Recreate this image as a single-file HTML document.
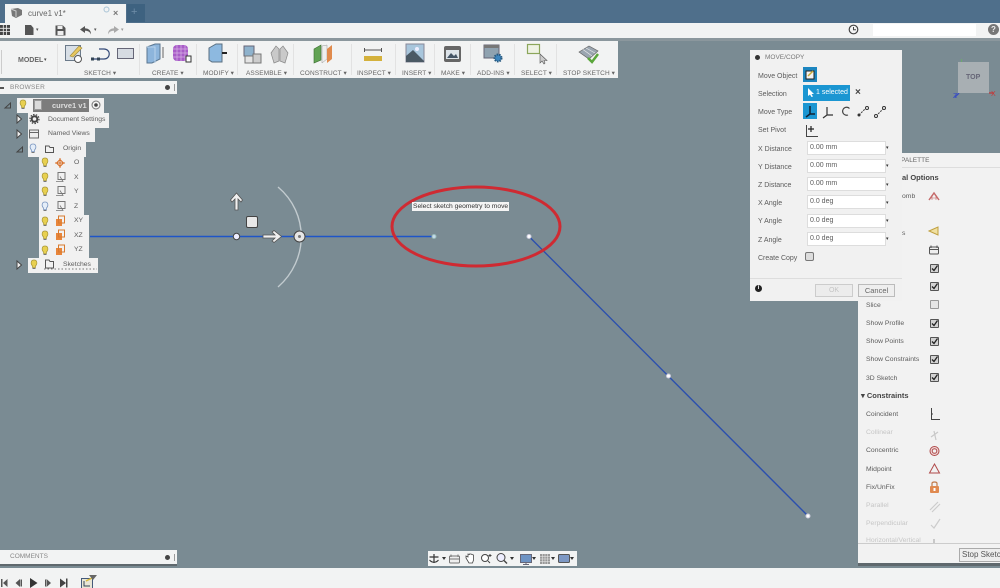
<!DOCTYPE html>
<html><head><meta charset="utf-8"><style>
html,body{margin:0;padding:0}
body{width:1000px;height:588px;overflow:hidden;position:relative;background:#7a8b93;font-family:"Liberation Sans",sans-serif;color:#555}
#w{position:absolute;left:0;top:0;width:1000px;height:588px;overflow:hidden;background:#7a8b93;filter:blur(.35px)}
.a{position:absolute}
.t{position:absolute;white-space:nowrap;font-size:6.800px;line-height:10px;color:#5c5c5c;margin-top:1px}
.tb{position:absolute;top:69px;white-space:nowrap;font-size:6.500px;line-height:10px;color:#666;letter-spacing:.1px}
.sep{position:absolute;top:44px;width:1px;height:31px;background:#e2e2e2}
.row{position:absolute;background:#f1f1f1;height:15px}
.l{position:absolute;white-space:nowrap;font-size:7px;line-height:10px;color:#5c5c5c;margin-top:2px}
.inp{position:absolute;left:807px;height:12px;background:#fff;border:1px solid #ddd;font-size:7px;line-height:12px;color:#5c5c5c;padding-left:2px;box-sizing:content-box;width:75px}
.dd{position:absolute;left:886px;font-size:5px;line-height:8px;color:#333}
.cb{position:absolute;left:930px;width:7px;height:7px;background:#d2d2d2;border:1px solid #555;border-radius:1px}
.cb svg{left:0;top:0}
svg{position:absolute;overflow:visible}
</style></head><body><div id="w">

<!-- top bars -->
<div class="a" style="left:0;top:0;width:1000px;height:23px;background:#4f6f8b"></div>
<div class="a" style="left:5px;top:4px;width:121px;height:19px;background:#f2f3f3"></div>
<div class="a" style="left:127px;top:4px;width:18px;height:18px;background:#3e6280"></div>
<div class="t" style="left:131px;top:6px;font-size:11px;color:#6f8ea8">+</div>
<svg style="left:10px;top:7px" width="14" height="12"><path d="M1 2L8 1L12 3V8L6 11L2 9Z" fill="#777"/><path d="M1 2L6 4V10" fill="none" stroke="#ccc"/></svg>
<div class="t" style="left:28px;top:8px;font-size:8px;color:#666">curve1 v1*</div>
<div class="t" style="left:113px;top:7px;font-size:9px;font-weight:bold;color:#777">×</div>
<svg style="left:103px;top:6px" width="8" height="8"><circle cx="3.500" cy="3.500" r="2.500" fill="none" stroke="#a9c4d6"/></svg>

<div class="a" style="left:0;top:23px;width:1000px;height:15px;background:#f2f3f3"></div>
<div class="a" style="left:0;top:38px;width:1000px;height:3px;background:#8b979d"></div>
<svg style="left:0;top:25px" width="11" height="11"><path d="M0 0H10V10H0Z" fill="#444"/><path d="M3.300 0V10M6.600 0V10M0 3.300H10M0 6.600H10" stroke="#eee" stroke-width=".8"/></svg>
<svg style="left:25px;top:25px" width="9" height="11"><path d="M0 0H6L8.500 3V10H0Z" fill="#555"/></svg>
<div class="t" style="left:36px;top:24px;font-size:5px;color:#555">▾</div>
<svg style="left:55px;top:25px" width="11" height="11"><path d="M.5.5H8L10.500 3V10.500H.5Z" fill="#555"/><rect x="2.500" y="1" width="5" height="3" fill="#eee"/><rect x="2.500" y="6" width="6" height="4" fill="#eee"/></svg>
<svg style="left:80px;top:26px" width="12" height="9"><path d="M5 0L0 3.500L5 7V4.800C8 4.800 10 6 11 8.500C11 4.500 9 2.500 5 2.200Z" fill="#555"/></svg>
<div class="t" style="left:94px;top:24px;font-size:5px;color:#555">▾</div>
<svg style="left:107px;top:26px" width="12" height="9"><path d="M7 0L12 3.500L7 7V4.800C4 4.800 2 6 1 8.500C1 4.500 3 2.500 7 2.200Z" fill="#aaa"/></svg>
<div class="t" style="left:121px;top:24px;font-size:5px;color:#999">▾</div>
<svg style="left:848px;top:24px" width="11" height="11"><circle cx="5.500" cy="5.500" r="4.300" fill="none" stroke="#444" stroke-width="1.200"/><path d="M5.500 3V5.800H8" fill="none" stroke="#444"/></svg>
<div class="a" style="left:873px;top:24px;width:103px;height:12px;background:#fff"></div>
<div class="a" style="left:988px;top:24px;width:11px;height:11px;border-radius:50%;background:#777;color:#eee;font-size:8px;line-height:11px;text-align:center;font-weight:bold">?</div>

<!-- toolbar -->
<div class="a" style="left:0;top:41px;width:618px;height:37px;background:#f2f3f3"></div>
<div class="sep" style="left:1px;height:24px;top:50px;background:#ccc"></div>
<div class="sep" style="left:57px"></div><div class="sep" style="left:139px"></div><div class="sep" style="left:196px"></div><div class="sep" style="left:237px"></div><div class="sep" style="left:293px"></div><div class="sep" style="left:351px"></div><div class="sep" style="left:395px"></div><div class="sep" style="left:434px"></div><div class="sep" style="left:470px"></div><div class="sep" style="left:514px"></div><div class="sep" style="left:556px"></div>
<div class="t" style="left:18px;top:55px;font-size:7px;font-weight:bold;color:#666">MODEL</div>
<div class="t" style="left:44px;top:54px;font-size:5px;color:#444">▾</div>
<div class="tb" style="left:84px">SKETCH ▾</div>
<div class="tb" style="left:152px">CREATE ▾</div>
<div class="tb" style="left:203px">MODIFY ▾</div>
<div class="tb" style="left:246px">ASSEMBLE ▾</div>
<div class="tb" style="left:300px">CONSTRUCT ▾</div>
<div class="tb" style="left:357px">INSPECT ▾</div>
<div class="tb" style="left:402px">INSERT ▾</div>
<div class="tb" style="left:441px">MAKE ▾</div>
<div class="tb" style="left:477px">ADD-INS ▾</div>
<div class="tb" style="left:521px">SELECT ▾</div>
<div class="tb" style="left:563px">STOP SKETCH ▾</div>

<svg style="left:0;top:41px" width="618" height="28">
 <rect x="65.500" y="4.500" width="15" height="15" fill="#d8dfe6" stroke="#6b7a8a"/><path d="M70 15L79 5L82 7L73 16Z" fill="#e8c860" stroke="#a08a3a" stroke-width=".6"/><circle cx="78" cy="18" r="3.500" fill="#fff" stroke="#555"/>
 <path d="M92 18H104C111 18 111 8 104 8H99" fill="none" stroke="#344a78" stroke-width="1.200"/><rect x="91" y="16.500" width="3" height="3" fill="#345"/><rect x="97" y="16.500" width="3" height="3" fill="#345"/>
 <rect x="117.500" y="7.500" width="16" height="10" fill="#d6dbe2" stroke="#667"/>
 <path d="M147 6L155 3H160V18L152 22H147Z" fill="#8db5dc" stroke="#5a7690"/><path d="M147 6H155V22" fill="none" stroke="#b9d4ec"/><path d="M163 6V17" stroke="#666"/>
 <rect x="173" y="4" width="15" height="16" rx="4" fill="#a85cc8"/><path d="M177 4V20M181 4V20M185 4V20M173 8H188M173 12H188M173 16H188" stroke="#d6b3e4" stroke-width=".7"/><rect x="186" y="15" width="5" height="6" fill="#fff" stroke="#333"/>
 <path d="M209 7L216 3H222V21H212L209 19Z" fill="#8db9e0" stroke="#5a6f80"/><path d="M222 12L227 12" stroke="#222" stroke-width="2"/>
 <rect x="244" y="5" width="10" height="10" fill="#8eb2cc" stroke="#667"/><rect x="245" y="15" width="9" height="7" fill="#e4e4e4" stroke="#777"/><rect x="253" y="13" width="8" height="9" fill="#ccc" stroke="#777"/>
 <path d="M271 12L276 5L279 8V20L274 22ZM288 12L283 5L280 8V20L285 22Z" fill="#c9c9c9" stroke="#888" stroke-width=".7"/>
 <path d="M314 8L321 4V19L314 22Z" fill="#62a354" stroke="#3b6e30" stroke-width=".6"/><path d="M322 5L327 4V18L322 22Z" fill="#eee" stroke="#999" stroke-width=".5"/><path d="M327 8L332 4V18L327 22Z" fill="#e08a4c"/>
 <rect x="364" y="15" width="18" height="5" fill="#d4b13c"/><path d="M364 9H382M364.500 7V11M381.500 7V11" stroke="#555" fill="none"/>
 <rect x="406" y="3" width="18" height="18" fill="#a8c6dc" stroke="#889"/><path d="M406 21V15L413 9L424 20V21Z" fill="#4a5964"/><circle cx="417" cy="8" r="2" fill="#eef"/>
 <rect x="444" y="5" width="17" height="16" rx="2" fill="#666"/><rect x="446" y="9" width="13" height="9" fill="#dde4ea"/><path d="M447 17L451 12L454 15L456 13L458 17Z" fill="#456"/>
 <rect x="484" y="4" width="15" height="13" fill="#8fa2b0" stroke="#667"/><rect x="484" y="4" width="15" height="3" fill="#777"/><circle cx="498" cy="17" r="3.500" fill="#3d86bf" stroke="#26587e" stroke-width="2" stroke-dasharray="1.500 1"/>
 <rect x="527.500" y="3.500" width="12" height="9" fill="#eef2e4" stroke="#8ba65a" stroke-width="1.200"/><path d="M540 13V22L542 20L544 23L545 22L544 19.500H547Z" fill="#ccc" stroke="#555" stroke-width=".6"/>
 <path d="M579 11L589 5L598 10L589 18Z" fill="#9aa5b0" stroke="#666" stroke-width=".7"/><path d="M583 8.500L592 15M586 7L595 12" stroke="#eee" stroke-width=".6"/><path d="M588 17L592 21L598 13" fill="none" stroke="#5aa63a" stroke-width="2.500"/>
</svg>

<!-- Browser header -->
<div class="a" style="left:0;top:81px;width:177px;height:13px;background:#f2f3f3"></div>
<div class="t" style="left:10px;top:82px;font-size:6.500px;color:#888;letter-spacing:.2px">BROWSER</div>
<div class="a" style="left:0;top:87px;width:4px;height:2px;background:#555"></div>
<div class="a" style="left:165px;top:85px;width:5px;height:5px;background:#444;border-radius:50%"></div>
<div class="a" style="left:174px;top:84px;width:1px;height:7px;background:#999"></div>

<!-- Tree -->
<div class="row" style="left:17px;top:98px;width:87px"></div>
<div class="a" style="left:33px;top:99px;width:56px;height:13px;background:#7c7c7c"></div>
<div class="t" style="left:52px;top:100px;font-size:7.500px;color:#ddd;font-weight:bold">curve1 v1</div>
<div class="a" style="left:34px;top:100px;width:8px;height:10px;background:#dadada;border:1px solid #999;box-sizing:border-box"></div>
<svg style="left:91px;top:100px" width="11" height="11"><circle cx="5" cy="5" r="4" fill="#f3f3f3" stroke="#777"/><circle cx="5" cy="5" r="1.800" fill="#444"/></svg>

<div class="row" style="left:28px;top:113px;width:81px"></div>
<div class="t" style="left:48px;top:114px">Document Settings</div>
<div class="row" style="left:28px;top:127px;width:67px"></div>
<div class="t" style="left:48px;top:128px">Named Views</div>
<div class="row" style="left:28px;top:142px;width:58px"></div>
<div class="t" style="left:63px;top:143px">Origin</div>
<div class="row" style="left:39px;top:157px;width:45px"></div><div class="t" style="left:74px;top:157px">O</div>
<div class="row" style="left:39px;top:171px;width:45px"></div><div class="t" style="left:74px;top:172px">X</div>
<div class="row" style="left:39px;top:186px;width:45px"></div><div class="t" style="left:74px;top:186px">Y</div>
<div class="row" style="left:39px;top:200px;width:45px"></div><div class="t" style="left:74px;top:201px">Z</div>
<div class="row" style="left:39px;top:215px;width:50px"></div><div class="t" style="left:74px;top:215px">XY</div>
<div class="row" style="left:39px;top:230px;width:50px"></div><div class="t" style="left:74px;top:230px">XZ</div>
<div class="row" style="left:39px;top:244px;width:50px"></div><div class="t" style="left:74px;top:244px">YZ</div>
<div class="row" style="left:28px;top:258px;width:70px"></div><div class="t" style="left:63px;top:259px">Sketches</div>

<svg style="left:0;top:0" width="1000" height="588">
 <defs>
  <g id="by"><path d="M0 -4C-3.500 -4 -3.500 0 -1.500 2V3.500H1.500V2C3.500 0 3.500 -4 0 -4Z" fill="#e8d050" stroke="#a8983a" stroke-width=".7"/><path d="M-1.500 4.500H1.500" stroke="#777"/></g>
  <g id="bb"><path d="M0 -4C-3.500 -4 -3.500 0 -1.500 2V3.500H1.500V2C3.500 0 3.500 -4 0 -4Z" fill="#e4edf8" stroke="#7a96c0" stroke-width=".8"/><path d="M-1.500 4.500H1.500" stroke="#777"/></g>
  <g id="pl"><rect x="-4" y="-2" width="6" height="7" fill="#e8853a"/><rect x="-1.500" y="-5" width="6" height="7" fill="none" stroke="#d87a30"/></g>
  <g id="ax"><rect x="-3" y="-4.500" width="7" height="7" fill="none" stroke="#777"/><path d="M-5 4.500H2L-1 -.5" fill="none" stroke="#777" stroke-width=".8"/></g>
 </defs>
 <use href="#by" x="23" y="104"/><use href="#bb" x="33" y="148"/>
 <use href="#by" x="45" y="162"/><use href="#by" x="45" y="177"/><use href="#by" x="45" y="191"/><use href="#bb" x="45" y="206"/><use href="#by" x="45" y="221"/><use href="#by" x="45" y="235"/><use href="#by" x="45" y="250"/><use href="#by" x="34" y="264"/>
 <path d="M60 158V168M55 163H65" stroke="#d8702a"/><path d="M60 159.500L63.500 163L60 166.500L56.500 163Z" fill="none" stroke="#d8702a"/>
 <use href="#ax" x="61" y="177"/><use href="#ax" x="61" y="191"/><use href="#ax" x="61" y="206"/>
 <use href="#pl" x="60" y="221"/><use href="#pl" x="60" y="235"/><use href="#pl" x="60" y="250"/>
 <path d="M5 108L10.500 103V108Z" fill="none" stroke="#444"/>
 <path d="M17 115V123L21.500 119Z" fill="#eee" stroke="#444"/>
 <path d="M17 130V138L21.500 134Z" fill="#eee" stroke="#444"/>
 <path d="M17 152L22.500 147V152Z" fill="none" stroke="#444"/>
 <path d="M17 261V269L21.500 265Z" fill="#eee" stroke="#444"/>
 <circle cx="34.500" cy="119" r="2.800" fill="none" stroke="#444" stroke-width="2"/><circle cx="34.500" cy="119" r="4.500" fill="none" stroke="#444" stroke-width="1.200" stroke-dasharray="1.500 1.300"/>
 <rect x="29.500" y="130" width="9" height="8" fill="#eee" stroke="#666"/><path d="M29.500 132.500H38.500" stroke="#666"/>
 <path d="M45.500 146H49L50 147.500H53.500V152.500H45.500Z" fill="none" stroke="#555"/>
 <path d="M45.500 260H49L50 261.500H53.500V268H45.500Z" fill="none" stroke="#555"/><path d="M44 269H97" stroke="#777" stroke-dasharray="1.500 2"/>

 <!-- sketch lines -->
 <path d="M90 236.500H434" stroke="#1e55c8" stroke-width="1.500"/>
 <path d="M529 236.500L808 516" stroke="#2b4fae" stroke-width="1.400"/>
 <circle cx="434" cy="236.500" r="2" fill="#c6dbe8" stroke="#9bb"/>
 <circle cx="529" cy="236.500" r="2" fill="#fff" stroke="#ccd"/>
 <circle cx="668.500" cy="376" r="2" fill="#fff" stroke="#ccd"/>
 <circle cx="808" cy="516" r="2" fill="#fff" stroke="#ccd"/>
 <!-- manipulator -->
 <path d="M278 187C309 213 309 260 278 287" fill="none" stroke="#c2cbcf" stroke-width="1.400"/>
 <circle cx="236.500" cy="236.500" r="3.200" fill="#eef" stroke="#444"/>
 <circle cx="299.500" cy="236.500" r="5.500" fill="#e6e6e6" stroke="#444" stroke-width="1"/><circle cx="299.500" cy="236.500" r="1.500" fill="#777"/>
 <rect x="246.500" y="216.500" width="11" height="11" rx="1.500" fill="#e8e8e8" stroke="#444"/>
 <path d="M235 210V199L232 202L230.500 200L236.500 193L242.500 200L241 202L238 199V210Z" fill="#f0f0f0" stroke="#555" stroke-width=".8"/>
 <path d="M263 235H275L272 232L274 230.500L281.500 236.500L274 242.500L272 241L275 238H263Z" fill="#f0f0f0" stroke="#555" stroke-width=".8"/>
 <!-- red ellipse -->
 <ellipse cx="476" cy="226.500" rx="84" ry="39.500" fill="none" stroke="#cf2a32" stroke-width="3"/>
 <!-- viewcube axes -->
 <path d="M961.500 59V72" stroke="#6eaa6e"/>
 <path d="M959 93L955 97" stroke="#3b4fc0" stroke-width="1.500"/>
 <path d="M989 93H994" stroke="#c23b3b" stroke-width="1.300"/>
</svg>

<div class="a" style="left:412px;top:202px;width:97px;height:9px;background:#f4f4f4"></div>
<div class="t" style="left:413px;top:201px;font-size:6.700px;line-height:9px;color:#333">Select sketch geometry to move</div>

<!-- viewcube -->
<div class="a" style="left:958px;top:62px;width:31px;height:31px;background:#a8afb3"></div>
<div class="t" style="left:966px;top:72px;font-size:7px;color:#667;font-weight:bold">TOP</div>
<div class="t" style="left:953px;top:91px;font-size:7px;color:#3b4fc0">Z</div>
<div class="t" style="left:991px;top:89px;font-size:7px;color:#c23b3b">X</div>

<!-- Sketch palette panel -->
<div class="a" style="left:858px;top:153px;width:142px;height:393px;background:#f2f2f2"></div>
<div class="t" style="left:901px;top:155px;font-size:6.500px;color:#666">PALETTE</div>
<div class="a" style="left:858px;top:167px;width:142px;height:1px;background:#ddd"></div>
<div class="t" style="left:902px;top:172px;font-size:7.500px;font-weight:bold;color:#444">al Options</div>
<div class="t" style="left:902px;top:191px">omb</div>
<div class="t" style="left:902px;top:228px">s</div>
<div class="t" style="left:866px;top:300px">Slice</div>
<div class="t" style="left:866px;top:318px">Show Profile</div>
<div class="t" style="left:866px;top:336px">Show Points</div>
<div class="t" style="left:866px;top:354px">Show Constraints</div>
<div class="t" style="left:866px;top:373px">3D Sketch</div>
<div class="t" style="left:861px;top:390px;font-size:7.500px;font-weight:bold;color:#444">▾ Constraints</div>
<div class="t" style="left:866px;top:409px">Coincident</div>
<div class="t" style="left:866px;top:427px;color:#c6c6c6">Collinear</div>
<div class="t" style="left:866px;top:445px">Concentric</div>
<div class="t" style="left:866px;top:464px">Midpoint</div>
<div class="t" style="left:866px;top:482px">Fix/UnFix</div>
<div class="t" style="left:866px;top:500px;color:#c6c6c6">Parallel</div>
<div class="t" style="left:866px;top:518px;color:#c6c6c6">Perpendicular</div>
<div class="t" style="left:866px;top:535px;height:7px;overflow:hidden;color:#c6c6c6">Horizontal/Vertical</div>
<div class="a" style="left:858px;top:543px;width:142px;height:1px;background:#ccc"></div>
<div class="a" style="left:858px;top:544px;width:142px;height:19px;background:#f2f2f2"></div>
<div class="a" style="left:858px;top:563px;width:142px;height:3px;background:#5f686d"></div>
<div class="a" style="left:959px;top:548px;width:50px;height:12px;background:#eee;border:1px solid #aaa;font-size:8px;line-height:12px;color:#555;padding-left:2px;white-space:nowrap">Stop Sketch</div>
<div class="cb" style="top:264px"><svg width="7" height="7"><path d="M1 3.500L3 5.500L6.500 .5" fill="none" stroke="#222" stroke-width="1.300"/></svg></div>
<div class="cb" style="top:282px"><svg width="7" height="7"><path d="M1 3.500L3 5.500L6.500 .5" fill="none" stroke="#222" stroke-width="1.300"/></svg></div>
<div class="cb" style="top:300px;background:#e6e6e6;border-color:#999"></div>
<div class="cb" style="top:319px"><svg width="7" height="7"><path d="M1 3.500L3 5.500L6.500 .5" fill="none" stroke="#222" stroke-width="1.300"/></svg></div>
<div class="cb" style="top:337px"><svg width="7" height="7"><path d="M1 3.500L3 5.500L6.500 .5" fill="none" stroke="#222" stroke-width="1.300"/></svg></div>
<div class="cb" style="top:355px"><svg width="7" height="7"><path d="M1 3.500L3 5.500L6.500 .5" fill="none" stroke="#222" stroke-width="1.300"/></svg></div>
<div class="cb" style="top:373px"><svg width="7" height="7"><path d="M1 3.500L3 5.500L6.500 .5" fill="none" stroke="#222" stroke-width="1.300"/></svg></div>
<svg style="left:925px;top:190px" width="20" height="360">
 <path d="M4 10L9 3L14 10" fill="none" stroke="#c56a6a" stroke-width="1.500"/><path d="M5 8H13M7 5V10M11 5V10" stroke="#c56a6a" stroke-width=".6"/>
 <path d="M4 41L13 37V45Z" fill="#f0e0a0" stroke="#c0a040"/>
 <rect x="4.500" y="57" width="9" height="7" rx="1" fill="#eee" stroke="#555"/><path d="M6 55.500V58M12 55.500V58M4.500 59.500H13.500" stroke="#555"/>
 <path d="M6.500 218V229.500H15" fill="none" stroke="#444"/><path d="M6 224L8 224" stroke="#444"/>
 <path d="M6 247L13 242M9 241L11 250" stroke="#c8c8c8" stroke-width="1.200"/>
 <circle cx="9.500" cy="261" r="4.500" fill="#f0d8d8" stroke="#b04a4a"/><circle cx="9.500" cy="261" r="2.300" fill="#f2f2f2" stroke="#b04a4a"/>
 <path d="M9.500 274L14.500 283H4.500Z" fill="none" stroke="#b04a4a"/>
 <rect x="5" y="296" width="9" height="7" rx="1" fill="#e08a50"/><path d="M7 296V293.500C7 291.500 12 291.500 12 293.500V296" fill="none" stroke="#c07a4a" stroke-width="1.200"/><rect x="8.500" y="298" width="2" height="3" fill="#fff"/>
 <path d="M5 320L13 312M7 322L15 314" stroke="#ccc" stroke-width="1.200"/>
 <path d="M6 335L9 338L15 329" fill="none" stroke="#ccc" stroke-width="1.200"/>
 <path d="M9 349V353" stroke="#bbb" stroke-width="1.500"/>
</svg>

<!-- Move/Copy dialog -->
<div class="a" style="left:750px;top:50px;width:152px;height:251px;background:#f1f1f1"></div>
<div class="a" style="left:755px;top:55px;width:5px;height:5px;background:#333;border-radius:50%"></div>
<div class="t" style="left:765px;top:52px;font-size:6.500px;color:#777">MOVE/COPY</div>
<div class="l" style="left:758px;top:70px">Move Object</div>
<div class="l" style="left:758px;top:88px">Selection</div>
<div class="l" style="left:758px;top:106px">Move Type</div>
<div class="l" style="left:758px;top:124px">Set Pivot</div>
<div class="l" style="left:758px;top:143px">X Distance</div>
<div class="l" style="left:758px;top:161px">Y Distance</div>
<div class="l" style="left:758px;top:179px">Z Distance</div>
<div class="l" style="left:758px;top:197px">X Angle</div>
<div class="l" style="left:758px;top:215px">Y Angle</div>
<div class="l" style="left:758px;top:234px">Z Angle</div>
<div class="l" style="left:758px;top:252px">Create Copy</div>
<div class="a" style="left:803px;top:67px;width:14px;height:15px;background:#1c86c0"></div>
<svg style="left:805px;top:69px" width="11" height="11"><rect x="1" y="2" width="8" height="8" fill="#f3f3f3" stroke="#222"/><path d="M3 7L8 2" stroke="#c8a838" stroke-width="1.500"/></svg>
<div class="a" style="left:803px;top:85px;width:47px;height:16px;background:#1b96d2"></div>
<svg style="left:807px;top:88px" width="8" height="10"><path d="M1 0V8L3 6.500L4.500 9L6 8.500L4.500 6H7Z" fill="#fff"/></svg>
<div class="t" style="left:816px;top:87px;color:#fff;font-size:7px">1 selected</div>
<div class="t" style="left:855px;top:87px;font-size:10px;line-height:10px;color:#444;font-weight:bold">×</div>
<div class="a" style="left:803px;top:103px;width:14px;height:16px;background:#1b96d2"></div>
<svg style="left:803px;top:103px" width="90" height="40">
 <path d="M7 3V11M7 11L12 11M7 11L3 14" stroke="#123" stroke-width="1.500" fill="none"/>
 <path d="M24 4V12M24 12H30M24 12L20 15" stroke="#333" stroke-width="1.200" fill="none"/>
 <path d="M46.500 5.500A4 4 0 1 0 45 12" fill="none" stroke="#444" stroke-width="1.200"/>
 <path d="M56 12L64 4" stroke="#444" stroke-dasharray="2 1"/><circle cx="56" cy="12" r="1.500" fill="#333"/><circle cx="64" cy="5" r="1.500" fill="#fff" stroke="#333"/>
 <path d="M73 13L81 5" stroke="#444" stroke-dasharray="2 1"/><circle cx="73" cy="13" r="1.500" fill="#fff" stroke="#333"/><circle cx="81" cy="5" r="1.500" fill="#fff" stroke="#333"/>
 <path d="M3.500 22V33.500H15" fill="none" stroke="#444"/><path d="M8 23V29M5 26H11" stroke="#222" stroke-width="1.200"/>
</svg>
<div class="inp" style="top:141px">0.00 mm</div><div class="dd" style="top:144px">▾</div>
<div class="inp" style="top:159px">0.00 mm</div><div class="dd" style="top:162px">▾</div>
<div class="inp" style="top:177px">0.00 mm</div><div class="dd" style="top:181px">▾</div>
<div class="inp" style="top:195px">0.0 deg</div><div class="dd" style="top:199px">▾</div>
<div class="inp" style="top:214px">0.0 deg</div><div class="dd" style="top:217px">▾</div>
<div class="inp" style="top:232px">0.0 deg</div><div class="dd" style="top:235px">▾</div>
<div class="a" style="left:805px;top:252px;width:7px;height:7px;background:#ddd;border:1px solid #777;border-radius:2px"></div>
<div class="a" style="left:750px;top:278px;width:152px;height:1px;background:#ddd"></div>
<div class="a" style="left:755px;top:285px;width:7px;height:7px;background:#222;border-radius:50%;color:#fff;font-size:6px;line-height:7px;text-align:center;font-weight:bold">i</div>
<div class="a" style="left:815px;top:284px;width:36px;height:11px;background:#ececec;border:1px solid #ccc;color:#c4c4c4;font-size:7px;line-height:11px;text-align:center">OK</div>
<div class="a" style="left:858px;top:284px;width:35px;height:11px;background:#eee;border:1px solid #bbb;color:#666;font-size:7.500px;line-height:11px;text-align:center">Cancel</div>

<!-- Comments -->
<div class="a" style="left:0;top:550px;width:177px;height:14px;background:#f2f3f3"></div>
<div class="a" style="left:0;top:564px;width:177px;height:2px;background:#5f686d"></div>
<div class="t" style="left:10px;top:551px;font-size:6.500px;color:#888">COMMENTS</div>
<div class="a" style="left:165px;top:555px;width:5px;height:5px;background:#444;border-radius:50%"></div>
<div class="a" style="left:174px;top:554px;width:1px;height:7px;background:#999"></div>

<!-- Nav bar -->
<div class="a" style="left:428px;top:551px;width:149px;height:15px;background:#f2f3f3"></div>
<svg style="left:428px;top:551px" width="149" height="15">
 <path d="M6 3V12M1.500 6H10.500" stroke="#333" stroke-width="1.200"/><path d="M1.500 9C4 12 8 12 10.500 9" fill="none" stroke="#333"/>
 <path d="M14 6H18L16 9Z" fill="#333"/>
 <rect x="21.500" y="5" width="10" height="7" rx="1" fill="#eee" stroke="#777"/><path d="M23 3.500V6M30 3.500V6M21.500 8H31.500" stroke="#777"/>
 <path d="M41 12L38 7V5L40 6V3L41.500 3.500V3L43 3L44 3.500L45.500 4V9L44.500 12Z" fill="#fff" stroke="#444" stroke-width=".8"/>
 <circle cx="57" cy="7" r="3.500" fill="#fff" stroke="#444"/><path d="M60 10L62 12M62 3V6M60.500 4.500H63.500" stroke="#444"/>
 <circle cx="73" cy="6.500" r="4" fill="#eef" stroke="#444"/><path d="M76 9.500L79 12.500" stroke="#444" stroke-width="1.400"/>
 <path d="M82 6H86L84 9Z" fill="#333"/>
 <rect x="92.500" y="3.500" width="11" height="8" fill="#6d93c4" stroke="#667"/><path d="M98 11.500V13M95 13.500H101" stroke="#667"/>
 <path d="M104 6H108L106 9Z" fill="#333"/>
 <rect x="112" y="3" width="10" height="10" fill="#999"/><path d="M114.500 3V13M117 3V13M119.500 3V13M112 5.500H122M112 8H122M112 10.500H122" stroke="#eee" stroke-width=".5"/>
 <path d="M123 6H127L125 9Z" fill="#333"/>
 <rect x="130.500" y="3.500" width="11" height="8" rx="1" fill="#7d98c4" stroke="#555"/>
 <path d="M142 6H146L144 9Z" fill="#333"/>
</svg>

<!-- Bottom bar -->
<div class="a" style="left:0;top:568px;width:1000px;height:20px;background:#f2f3f3"></div>
<svg style="left:0;top:0" width="110" height="588">
 <path d="M1 579H2.500V587H1ZM7.500 579L3 583L7.500 587Z" fill="#555"/>
 <path d="M20 579L15.500 583L20 587ZM20.500 579.500H22V586.500H20.500Z" fill="#555"/>
 <path d="M30 578L37.500 583L30 588Z" fill="#333"/>
 <path d="M46.500 579L51 583L46.500 587ZM45 579.500H46V586.500H45Z" fill="#555"/>
 <path d="M60 578.500L66 583L60 587.500ZM66 578.500H67.500V587.500H66Z" fill="#444"/>
 <rect x="81.500" y="578.500" width="11" height="10" fill="#e8e6d6" stroke="#445a7a"/><path d="M84 581V586H90" fill="none" stroke="#345"/>
 <path d="M86 581L92 578" stroke="#d8b83a" stroke-width="1.500"/>
 <path d="M89 575H97L93 580Z" fill="#666"/>
</svg>
</div></body></html>
